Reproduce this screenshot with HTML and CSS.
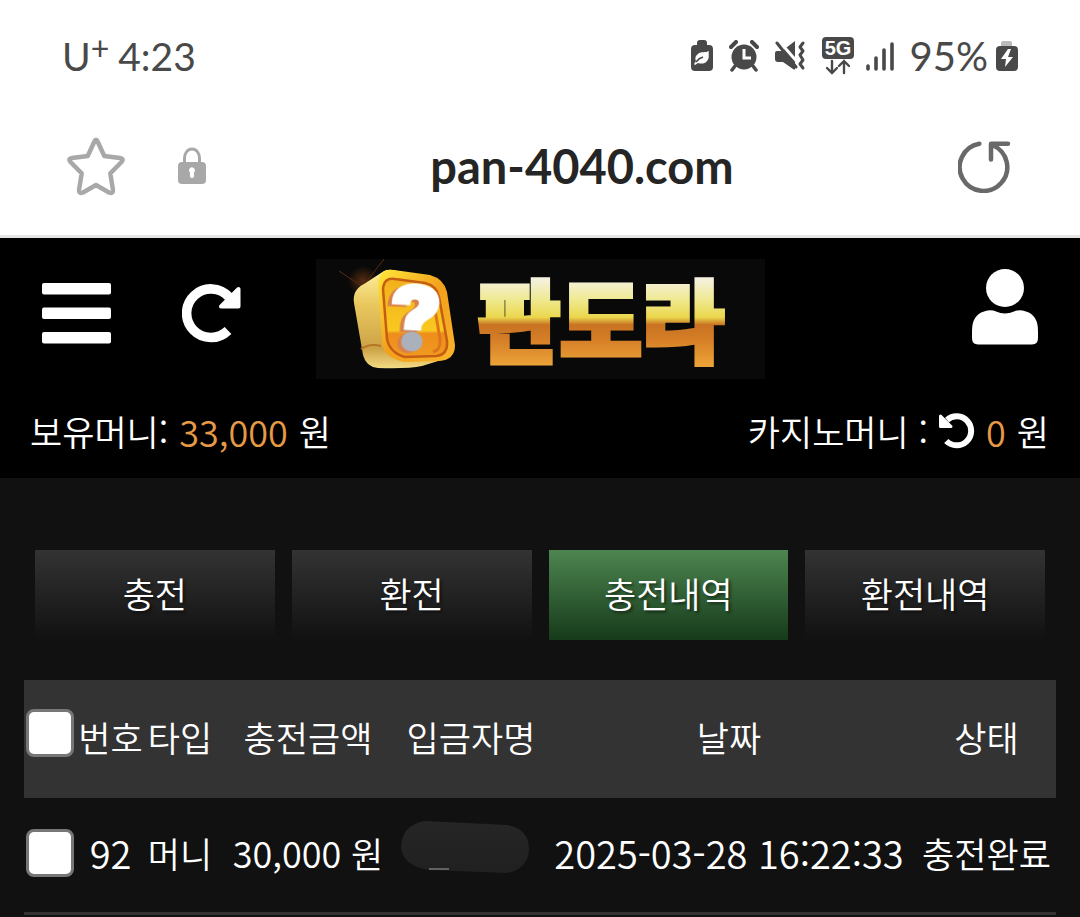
FILE: index.html
```html
<!DOCTYPE html>
<html lang="ko">
<head>
<meta charset="utf-8">
<meta name="viewport" content="width=device-width, initial-scale=1">
<title>pan-4040.com</title>
<link rel="stylesheet" href="styles.css">
</head>
<body>
<div class="status-bar">
  <div class="status-left"><span class="carrier">U<sup>+</sup></span><time>4:23</time></div>
  <div class="status-right">
    <svg width="22" height="32" viewBox="0 0 22 32"><path fill="#494949" d="M6 3q0-3 3-3h4q3 0 3 3v2h2q4 0 4 4v18q0 4-4 4H4q-4 0-4-4V9q0-4 4-4h2z"/><path fill="#fff" d="M18 11c-3 2-8 0-11 3-3 2-3 5-2 7l-2 3 1 1 3-2c3 1 7 1 9-2 3-3 1-7 2-10z"/><path stroke="#494949" stroke-width="1.5" fill="none" d="M5 22q3-4 7-5"/></svg>
    <svg width="30" height="32" viewBox="0 0 30 32"><circle cx="15" cy="17" r="12.5" fill="#494949"/><path d="M2 7l5-5M28 7l-5-5" stroke="#494949" stroke-width="4" stroke-linecap="round"/><path d="M6 26l-3 4M24 26l3 4" stroke="#494949" stroke-width="3.5" stroke-linecap="round"/><path d="M15 9v9h7" stroke="#fff" stroke-width="3" fill="none"/></svg>
    <svg width="31" height="32" viewBox="0 0 31 32"><path fill="#494949" d="M0 13q0-2 2-2h5L20 1v28q0 1-2 0L8 22H3q-3 0-3-3z"/><path d="M3 0l22 25" stroke="#fff" stroke-width="3"/><path d="M2 3l19 24" stroke="#494949" stroke-width="3" stroke-linecap="round"/><path d="M28 3l-3 4 3 4-3 4 3 5-3 4 3 4" fill="none" stroke="#494949" stroke-width="3" stroke-linecap="round" stroke-linejoin="round"/></svg>
    <svg width="32" height="38" viewBox="0 0 32 38"><rect width="32" height="22" rx="4" fill="#494949"/><text x="16" y="18" class="net-text">5G</text><path d="M10 24v12M5 31l5 5 5-5M22 36V24M17 29l5-5 5 5" fill="none" stroke="#494949" stroke-width="2.4" stroke-linecap="round"/></svg>
    <svg class="signal" width="28" height="32" viewBox="0 0 28 32" stroke="#494949" stroke-width="3.6" stroke-linecap="round"><path d="M2 26v3M10 18v11M18 10v19M26 4v25"/></svg>
    <span class="percent">95%</span>
    <svg class="charge" width="22" height="32" viewBox="0 0 22 32"><path fill="#bbb" d="M5 6V3q0-2 2-2h7q2 0 2 2v3z"/><rect y="6" width="22" height="25" rx="4" fill="#494949"/><path fill="#fff" d="M12 9L5 19h5l-1 8 8-10h-5l3-8z"/></svg>
  </div>
</div>
<div class="browser-bar">
  <div class="bar-left">
    <button class="icon-button" aria-label="즐겨찾기"><svg width="60" height="60" viewBox="0 0 60 60"><path d="M28.400 5.500q1.600-3.500 3.200 0L38.300 20 54 22q4.500.8 1.500 4L44.300 37.300 47 54q0 4-4 2.500L30 49l-13 7.500q-4 1.500-4-2.500l2.700-16.700L4.500 26Q1.500 22.800 6 22l15.700-2z" fill="none" stroke="#a8a8a8" stroke-width="4.500" stroke-linejoin="round"/></svg></button>
    <svg width="28" height="38" viewBox="0 0 28 38"><path d="M6.500 17V11a7.500 9 0 0 1 15 0v6" fill="none" stroke="#a8a8a8" stroke-width="3"/><rect y="15" width="28" height="22" rx="4" fill="#a8a8a8"/><path fill="#fff" d="M11 24a3 3 0 1 1 5 1.500V30q-2 2-4 0v-4.500z"/></svg>
  </div>
  <div class="url">pan-4040.com</div>
  <button class="icon-button" aria-label="새로고침"><svg width="53" height="53" viewBox="0 0 53 53"><path d="M21.300 3.700A23.800 23.800 0 1 0 34.700 5.200M50 3.700H33V19.500" fill="none" stroke="#696969" stroke-width="4.500" stroke-linecap="round" stroke-linejoin="round"/></svg></button>
</div>
<header class="site-header">
  <div class="brand-row">
    <div class="header-left">
      <button class="icon-button" aria-label="메뉴"><svg width="69" height="61" viewBox="0 0 69 61" fill="#fff"><rect width="69" height="11.500" rx="2"/><rect y="24.500" width="69" height="11.500" rx="2"/><rect y="49" width="69" height="11.500" rx="2"/></svg></button>
      <button class="icon-button" aria-label="새로고침"><svg width="59" height="60" viewBox="0 0 59 60"><path d="M46 47.500A24.300 24.300 0 1 1 47 14" fill="none" stroke="#fff" stroke-width="9.600"/><path d="M56.500 6v17.500H39z" fill="#fff" stroke="#fff" stroke-width="4" stroke-linejoin="round"/></svg></button>
    </div>
    <a class="logo" href="#" aria-label="판도라">
      <svg width="449" height="120" viewBox="0 0 449 120">
        <defs>
          <linearGradient id="word" x1="0" y1="20" x2="0" y2="105" gradientUnits="userSpaceOnUse"><stop offset="0" stop-color="#f5f1df"/><stop offset=".25" stop-color="#efe98f"/><stop offset=".45" stop-color="#ead64c"/><stop offset=".54" stop-color="#c97222"/><stop offset=".72" stop-color="#d67f27"/><stop offset="1" stop-color="#eaa137"/></linearGradient>
          <linearGradient id="side" x1="0" y1="0" x2="0" y2="1"><stop offset="0" stop-color="#fff0a0"/><stop offset=".35" stop-color="#e9c85e"/><stop offset=".8" stop-color="#cda246"/><stop offset="1" stop-color="#f3dc84"/></linearGradient>
          <linearGradient id="rim" x1="0" y1="0" x2="1" y2="1"><stop offset="0" stop-color="#ffe83a"/><stop offset=".5" stop-color="#f3a01c"/><stop offset="1" stop-color="#f9b52b"/></linearGradient>
          <linearGradient id="face" x1="0" y1="0" x2="0" y2="1"><stop offset="0" stop-color="#f2b01c"/><stop offset=".66" stop-color="#f9c81f"/><stop offset=".7" stop-color="#ee8e1c"/><stop offset="1" stop-color="#f09a20"/></linearGradient>
          <linearGradient id="mark" x1="0" y1="0" x2="0" y2="120" gradientUnits="userSpaceOnUse"><stop offset=".59" stop-color="#fff"/><stop offset=".6" stop-color="#aab1bb"/></linearGradient>
          <radialGradient id="glow"><stop offset="0" stop-color="#b8581a" stop-opacity=".45"/><stop offset="1" stop-color="#b8581a" stop-opacity="0"/></radialGradient>
        </defs>
        <circle cx="47" cy="22" r="15" fill="url(#glow)"/><path d="M23 12l24 16M68 0L48 26" stroke="#5a2c12" stroke-width="1"/>
        <path fill="url(#side)" d="M38 44Q36 31 48 25L68 12Q74 9 84 13L88 98 132 99 106 107Q92 110 62 109 50 108 47 96z"/>
        <path d="M62 24Q64 9 78 11L114 16Q128 20 131 33L139 86Q139 101 123 102L88 103Q68 99 66 84z" fill="url(#rim)"/>
        <path d="M67 30Q68 18 79 20L109 24Q121 27 123 38L131 82Q132 96 120 97L89 98Q74 94 71 80z" fill="url(#face)" stroke="#c55d13" stroke-width="2.500"/>
        <path d="M116 33l8 47q1 11-7 13" fill="none" stroke="#df751a" stroke-width="3"/><path d="M45 90q9-6 20-3" stroke="#b57626" stroke-width="2" fill="none"/>
        <text class="logo-mark" x="99" y="90" transform="rotate(3 99 60)">?</text>
        <text class="logo-word" x="285" y="96">판도라</text>
      </svg>
    </a>
    <button class="icon-button account" aria-label="내 정보"><svg width="66" height="76" viewBox="0 0 66 76" fill="#fff"><circle cx="33" cy="19" r="19"/><path d="M0 62Q0 46 12 42.500q7-2.500 12 0 9 4 18 0 5-2.500 12 0Q66 46 66 62v7q0 6.500-6 6.500H6Q0 75.500 0 69z"/></svg></button>
  </div>
  <div class="balances">
    <div class="balance"><span>보유머니:</span><span class="amount">33,000</span><span>원</span></div>
    <div class="balance"><span>카지노머니 :</span><button class="icon-button" aria-label="카지노머니 새로고침"><svg width="36" height="36" viewBox="0 0 36 36"><path d="M7.300 28A14.500 14.500 0 1 0 8 7" fill="none" stroke="#fff" stroke-width="6"/><path d="M1.500 3v10.500H12z" fill="#fff" stroke="#fff" stroke-width="3" stroke-linejoin="round"/></svg></button><span class="amount">0</span><span>원</span></div>
  </div>
</header>
<main class="content">
  <nav class="tabs">
    <button class="tab">충전</button>
    <button class="tab">환전</button>
    <button class="tab tab-active" aria-current="page">충전내역</button>
    <button class="tab">환전내역</button>
  </nav>
  <table class="history">
    <colgroup><col class="c-check"><col class="c-no"><col class="c-type"><col class="c-amount"><col class="c-name"><col class="c-date"><col class="c-state"></colgroup>
    <thead>
      <tr><th><input type="checkbox" class="check" aria-label="전체 선택"></th><th>번호</th><th>타입</th><th>충전금액</th><th>입금자명</th><th>날짜</th><th>상태</th></tr>
    </thead>
    <tbody>
      <tr><td><input type="checkbox" class="check" aria-label="92번 선택"></td><td class="number">92</td><td>머니</td><td><span class="sum">30,000</span> 원</td><td class="name-cell"><svg width="128" height="64" viewBox="0 0 128 64"><defs><linearGradient id="veil" x1="0" y1="0" x2="0" y2="1"><stop offset="0" stop-color="#262626"/><stop offset="1" stop-color="#202020"/></linearGradient></defs><path d="M24 0L106 4Q128 8 128 28 127 48 106 52L28 49Q2 45 0 26 1 4 24 0z" fill="url(#veil)"/><path d="M28 48h20" stroke="#777" stroke-width="1.500"/></svg></td><td class="number">2025-03-28 16:22:33</td><td>충전완료</td></tr>
    </tbody>
  </table>
</main>
</body>
</html>
```

FILE: styles.css
```css
* { box-sizing: border-box; }

body {
  margin: 0;
  min-height: 100vh;
  display: flex;
  flex-direction: column;
  background: #fff;
  color: #fff;
  font-family: "Noto Sans CJK KR", sans-serif;
  font-size: 35px;
  font-weight: 350;
  line-height: 48px;
}

button { font: inherit; color: inherit; cursor: pointer; }
svg { display: block; flex: none; }

.icon-button {
  display: block;
  padding: 0;
  border: 0;
  background: none;
}

.status-bar {
  display: flex;
  justify-content: space-between;
  align-items: center;
  padding: 32px 62px 20px;
  color: #494949;
  font-family: Lato, sans-serif;
  font-size: 40px;
  font-weight: 400;
}

.status-left, .status-right { display: flex; align-items: center; }
.status-left { gap: 9px; font-size: 39px; }
.carrier sup { font-size: 32px; line-height: 0; vertical-align: 11px; }
.status-right { gap: 16px; }
.signal { margin-left: -4px; }
.charge { margin-left: -8px; }
.net-text {
  fill: #fff;
  font: 700 20px "Liberation Sans", sans-serif;
  text-anchor: middle;
}

.browser-bar {
  display: flex;
  justify-content: space-between;
  align-items: center;
  padding: 32px 69px 35px 66px;
  border-bottom: 3px solid #e5e5e5;
}
.bar-left { display: flex; align-items: center; gap: 52px; }
.url {
  color: #252525;
  font: 700 47px/68px Lato, sans-serif;
}

.site-header { background: #000; padding-top: 21px; }
.brand-row {
  display: grid;
  grid-template-columns: 1fr auto 1fr;
  align-items: center;
  padding: 0 42px;
}
.header-left {
  display: flex;
  align-items: center;
  gap: 71px;
  padding-bottom: 12px;
}
.logo { background: #090909; }
.logo svg { overflow: visible; }
.logo-word {
  fill: url(#word);
  stroke: url(#word);
  stroke-width: 5px;
  font: 900 89px "Noto Sans CJK KR", sans-serif;
  text-anchor: middle;
}
.logo-mark {
  fill: url(#mark);
  stroke: url(#mark);
  stroke-width: 3px;
  font: 900 86px Inter, sans-serif;
  text-anchor: middle;
  filter: drop-shadow(-4px 2px 0 #d9814a);
}
.account { justify-self: end; padding-bottom: 24px; }

.balances {
  display: flex;
  justify-content: space-between;
  padding: 28px 31px 23px 30px;
}
.balance { display: flex; align-items: center; gap: 11px; }
.amount { color: #e79a45; }
.amount, .sum { font-size: 36px; }
.number { font-size: 38px; }

.content { flex: 1; background: #111; padding: 72px 24px 0; }

.tabs {
  display: grid;
  grid-template-columns: repeat(4, 1fr);
  gap: 17px;
  padding: 0 11px;
  margin-bottom: 40px;
}
.tab {
  height: 90px;
  padding: 0 0 4px;
  border: 0;
  background: linear-gradient(#333, #111);
  text-shadow: 2px 2px 3px #0008;
}
.tab-active { background: linear-gradient(#4d8550, #163a1a); }

.history {
  width: 100%;
  table-layout: fixed;
  border-collapse: collapse;
  text-align: center;
  white-space: nowrap;
}
.history th, .history td { padding: 0 0 4px; font-weight: 350; }
.history thead { background: #333; }
.history th { height: 118px; }
.history td { height: 115px; border-bottom: 3px solid #333; }
.history th:first-child { padding-bottom: 12px; }
.c-check { width: 52px; }
.c-no { width: 69px; }
.c-type { width: 70px; }
.c-amount { width: 186px; }
.c-name { width: 140px; }
.c-state { width: 139px; }
.history .name-cell { text-align: left; }

.check {
  display: block;
  appearance: none;
  width: 48px;
  height: 48px;
  margin: 0 0 0 2px;
  border: 3px solid #777;
  border-radius: 8px;
  background: #fff;
}
.check:checked { background: #4d8550; }
```
